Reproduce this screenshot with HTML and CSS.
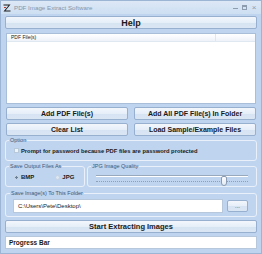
FILE: index.html
```html
<!DOCTYPE html>
<html>
<head>
<meta charset="utf-8">
<title>PDF Image Extract Software</title>
<link rel="stylesheet" href="styles.css">
</head>
<body>
<div class="window">
  <div class="titlebar">
    <svg class="appicon" width="8" height="8" viewBox="0 0 8 8"><path d="M0.5 0.5H7.5L2.5 6.5H7.5V7.5H0.5L5.5 1.5H0.5Z" fill="#1b1b1b"/><path d="M1 3.5L3 3.5" stroke="#c0392b" stroke-width="1"/></svg>
    <span class="title">PDF Image Extract Software</span>
    <div class="winctl"><span class="min"></span><span class="max"></span><span class="close">×</span></div>
  </div>
  <div class="client">
    <button class="btn big help">Help</button>
    <div class="list">
      <div class="listhead"><span class="col1">PDF File(s)</span><span class="col2"></span></div>
      <div class="listbody"></div>
    </div>
    <div class="btnrow">
      <button class="btn">Add PDF File(s)</button>
      <button class="btn">Add All PDF File(s) In Folder</button>
    </div>
    <div class="btnrow">
      <button class="btn">Clear List</button>
      <button class="btn">Load Sample/Example Files</button>
    </div>
    <fieldset class="group option">
      <legend>Option</legend>
      <div class="check"><span class="box"></span><span>Prompt for password because PDF files are password protected</span></div>
    </fieldset>
    <div class="grouprow">
      <fieldset class="group fmt">
        <legend>Save Output Files As</legend>
        <div class="radios">
          <div class="radio on"><span class="dot"></span><span>BMP</span></div>
          <div class="radio"><span class="dot"></span><span>JPG</span></div>
        </div>
      </fieldset>
      <fieldset class="group quality">
        <legend>JPG Image Quality</legend>
        <div class="slider">
          <div class="track"></div>
          <div class="ticks"></div>
          <div class="thumb"></div>
        </div>
      </fieldset>
    </div>
    <fieldset class="group folder">
      <legend>Save Image(s) To This Folder</legend>
      <div class="pathrow">
        <div class="path">C:\Users\Pete\Desktop\</div>
        <button class="btn browse">...</button>
      </div>
    </fieldset>
    <button class="btn big start">Start Extracting Images</button>
    <div class="progress">Progress Bar</div>
  </div>
</div>
</body>
</html>
```
FILE: styles.css
```css
* { box-sizing: border-box; }
html, body { margin: 0; padding: 0; }
body {
  width: 262px;
  height: 254px;
  overflow: hidden;
  font-family: "Liberation Sans", Arial, sans-serif;
  background: #bcd1ec;
}
.window {
  width: 262px;
  height: 254px;
  display: flex;
  flex-direction: column;
  background: #bfd4ee;
  border: 1px solid #9db5d4;
}
.titlebar {
  height: 13px;
  display: flex;
  align-items: center;
  padding: 0 0 0 2px;
  background: linear-gradient(#dde8f6, #cddff2);
}
.appicon { display: block; margin-right: 3px; }
.title {
  font-size: 6.2px;
  color: #8796aa;
  white-space: nowrap;
  flex: 1;
}
.winctl { display: flex; align-items: center; gap: 4px; padding-right: 4px; }
.winctl span { display: block; width: 5px; height: 5px; color: #8e9cb0; }
.winctl .min { border-bottom: 1px solid #8e9cb0; height: 4px; margin-top: -1px; }
.winctl .max { border: 1px solid #8e9cb0; border-top-width: 2px; }
.winctl .close { font-size: 8px; line-height: 5px; width: 6px; text-align: center; }
.client {
  flex: 1;
  display: flex;
  flex-direction: column;
  padding: 2px 4px 0 4px;
}
.btn {
  display: block;
  margin: 0;
  padding: 0;
  height: 13px;
  border: 1px solid #98b0cf;
  border-radius: 2px;
  background: linear-gradient(#f3f7fc 0%, #e6eef8 50%, #d6e3f2 51%, #dbe6f4 100%);
  font-family: "Liberation Sans", Arial, sans-serif;
  font-weight: bold;
  font-size: 7px;
  color: #1a1a1a;
  white-space: nowrap;
}
.help { font-size: 9px; }
.start { font-size: 7.5px; margin-top: 3px; }
.list {
  margin: 4px 1px 0 1px;
  height: 71px;
  background: #fff;
  border: 1px solid #a9bfd9;
  display: flex;
  flex-direction: column;
}
.listhead {
  height: 8px;
  display: flex;
  background: linear-gradient(#ffffff, #eef3f9);
  border-bottom: 1px solid #dfe7f1;
}
.col1 {
  width: 209px;
  font-size: 5px;
  line-height: 7px;
  padding-left: 4px;
  color: #222;
  border-right: 1px solid #dfe6ef;
}
.col2 { flex: 1; }
.listbody { flex: 1; }
.btnrow {
  display: flex;
  gap: 6px;
  margin: 3px 1px 0 1px;
}
.btnrow .btn { flex: 1; }
.btnrow + .btnrow { margin-top: 3px; }
.group {
  margin: 0;
  padding: 0 6px 0 6px;
  min-width: 0;
  border: 1px solid #e9f0f9;
  border-radius: 3px;
}
.group legend {
  font-size: 5.5px;
  line-height: 7px;
  padding: 0 1px;
  margin-left: -3px;
  color: #3e5878;
}
.option { margin-top: 1px; height: 24px; }
.check {
  display: flex;
  align-items: center;
  gap: 2px;
  height: 13px;
  padding-left: 2px;
  font-size: 5.8px;
  font-weight: bold;
  color: #1a1a1a;
  white-space: nowrap;
}
.check .box {
  width: 5px;
  height: 5px;
  border: 1px solid #b9c9dc;
  background: #eef3f8;
}
.grouprow { display: flex; gap: 2px; margin-top: 2px; height: 24px; }
.fmt { width: 80px; }
.quality { flex: 1; }
.radios { display: flex; gap: 21px; height: 14px; align-items: center; padding-left: 2px; }
.radio {
  display: flex;
  align-items: center;
  gap: 2px;
  font-size: 6px;
  font-weight: bold;
  color: #1a1a1a;
}
.radio .dot {
  width: 5px;
  height: 5px;
  border-radius: 50%;
  background: #dde7f2;
  border: 1px solid #c5d3e3;
}
.radio.on .dot { background: radial-gradient(circle, #6a7f98 0 1.2px, #dde7f2 1.5px); }
.slider { position: relative; height: 15px; margin: 0 2px; }
.track {
  margin-top: 5px;
  height: 2px;
  border-top: 1px solid #98a9be;
  border-bottom: 1px solid #ffffff;
}
.ticks {
  margin-top: 4px;
  height: 1px;
  border-top: 1px dotted #8fa0b6;
}
.thumb {
  position: absolute;
  left: 125px;
  top: 1px;
  width: 6px;
  height: 10px;
  border: 1px solid #8a9bb2;
  border-radius: 2px 2px 3px 3px;
  background: linear-gradient(#fbfcfe, #e4ebf4);
}
.folder { margin-top: 3px; height: 27px; padding: 0 8px 0 7px; }
.pathrow { display: flex; align-items: center; gap: 4px; height: 15px; margin-top: 1px; }
.path {
  flex: 1;
  height: 14px;
  background: #fff;
  border: 1px solid #b7c8dc;
  font-size: 6px;
  line-height: 12px;
  padding-left: 4px;
  color: #1a1a1a;
}
.browse { width: 21px; height: 12px; font-size: 6px; font-weight: normal; color: #333; }
.progress {
  margin-top: 3px;
  height: 13px;
  background: #fff;
  border: 1px solid #b7c8dc;
  font-size: 6.5px;
  font-weight: bold;
  line-height: 11px;
  padding-left: 3px;
  color: #1a1a1a;
}
```
